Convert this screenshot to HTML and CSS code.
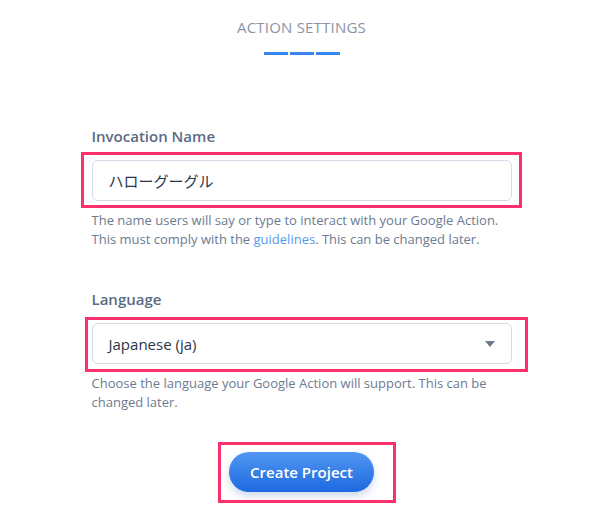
FILE: index.html
```html
<!DOCTYPE html>
<html lang="en">
<head>
<meta charset="utf-8">
<title>Action Settings</title>
<link rel="stylesheet" href="styles.css">
</head>
<body>
<main class="panel">
  <header class="head">
    <h1 class="title">ACTION SETTINGS</h1>
    <div class="steps"><span class="step"></span><span class="step"></span><span class="step"></span></div>
  </header>

  <section class="field field-first">
    <label class="label" for="inv">Invocation Name</label>
    <div class="control">
      <input id="inv" class="input" type="text" value="ハローグーグル">
      <span class="mark mark-inv"></span>
    </div>
    <p class="help">The name users will say or type to interact with your Google Action.<br>This must comply with the <a class="link" href="#">guidelines</a>. This can be changed later.</p>
  </section>

  <section class="field field-second">
    <label class="label">Language</label>
    <div class="control">
      <div class="select">
        <span class="select-text">Japanese (ja)</span>
        <span class="caret"></span>
      </div>
      <span class="mark mark-lang"></span>
    </div>
    <p class="help">Choose the language your Google Action will support. This can be<br>changed later.</p>
  </section>

  <div class="actions">
    <div class="btn-wrap">
      <button class="btn" type="button">Create Project</button>
      <span class="mark mark-btn"></span>
    </div>
  </div>
</main>
</body>
</html>
```

FILE: styles.css
```css
* { box-sizing: border-box; }
html, body { margin: 0; padding: 0; background: #ffffff; }
body {
  font-family: "Open Sans", "Noto Sans", "Noto Sans CJK JP", sans-serif;
  color: #5d6b80;
}
.panel {
  width: 420px;
  margin: 0 auto;
  padding-top: 17px;
  padding-bottom: 40px;
}
.head {
  display: flex;
  flex-direction: column;
  align-items: center;
}
.title {
  margin: 0;
  font-size: 15px;
  line-height: 20px;
  font-weight: 400;
  letter-spacing: 0.2px;
  color: #8a93a6;
}
.steps {
  display: flex;
  gap: 2px;
  margin-top: 15px;
}
.step {
  width: 24px;
  height: 3px;
  background: #3a86f0;
}
.field-first { margin-top: 71px; }
.field-second { margin-top: 40px; }
.label {
  display: block;
  font-size: 15px;
  line-height: 20px;
  font-weight: 600;
  color: #5b6b82;
}
.control {
  position: relative;
  margin-top: 14px;
}
.input, .select {
  display: flex;
  align-items: center;
  width: 420px;
  height: 41px;
  border: 1px solid #d5dbe6;
  border-radius: 6px;
  background: #fff;
  padding: 0 16px;
  font-size: 15px;
  color: #2c3447;
}
.input {
  font-family: "Noto Sans CJK JP", "Open Sans", sans-serif;
  outline: none;
}
.select { justify-content: space-between; }
.select-text { font-size: 15px; color: #2c3447; }
.caret {
  width: 0;
  height: 0;
  border-left: 5px solid transparent;
  border-right: 5px solid transparent;
  border-top: 6px solid #6b7a90;
}
.help {
  margin: 10px 0 0;
  font-size: 13px;
  line-height: 19px;
  color: #6b7b92;
}
.link { color: #5599ee; text-decoration: none; }
.actions {
  display: flex;
  justify-content: center;
  margin-top: 40px;
}
.btn-wrap { position: relative; display: flex; }
.btn {
  display: block;
  width: 145px;
  height: 40px;
  border: 0;
  border-radius: 20px;
  background: linear-gradient(#5196f1, #1d6ae0);
  color: #fff;
  font-family: "Open Sans", sans-serif;
  font-size: 15px;
  font-weight: 600;
  box-shadow: 0 4px 8px rgba(30, 80, 160, 0.22);
  padding: 0;
}
.mark {
  position: absolute;
  border: 3px solid #fb2f6c;
  pointer-events: none;
}
.mark-inv { left: -11px; right: -10px; top: -8px; bottom: -7px; }
.mark-lang { left: -7px; right: -16px; top: -6px; bottom: -8px; }
.mark-btn { left: -11px; right: -22px; top: -10px; bottom: -11px; }
```
